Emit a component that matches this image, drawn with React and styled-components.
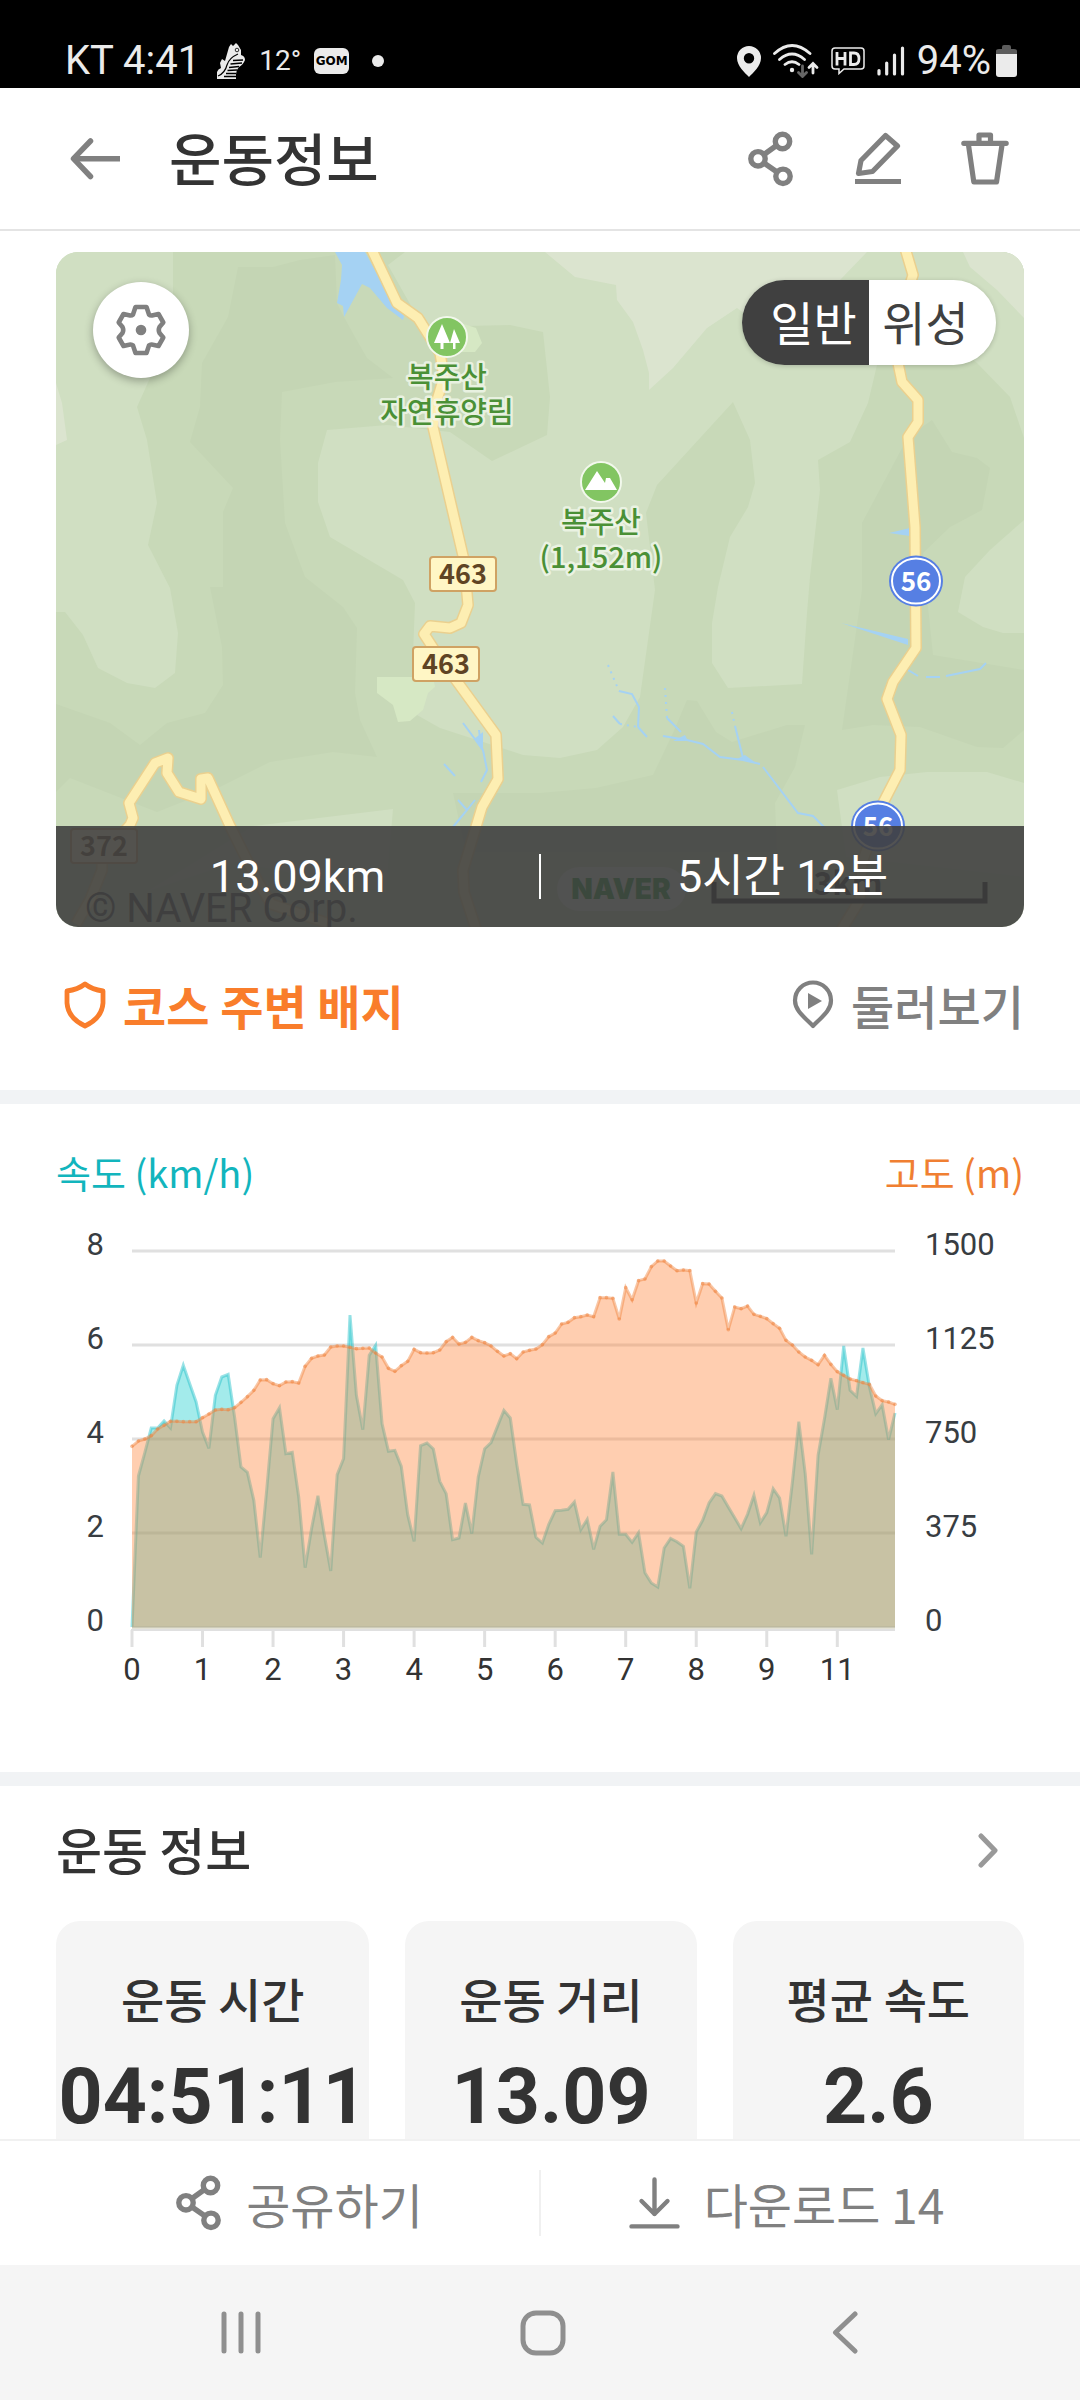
import React, { useState } from 'react';
import styled, { createGlobalStyle } from 'styled-components';

const GlobalStyle = createGlobalStyle`
  * {
    box-sizing: border-box;
  }

  body {
    margin: 0;
    background-color: #fff;
    font-family: 'Noto Sans CJK KR', 'Noto Sans', sans-serif;
    color: #333;
  }

  button {
    margin: 0;
    padding: 0;
    border: none;
    background: none;
    font-family: inherit;
    color: inherit;
    cursor: pointer;
  }

  svg {
    display: block;
    flex-shrink: 0;
  }
`;

// latin digits in Roboto, hangul in Noto
const MIXED = "Roboto, 'Noto Sans CJK KR', sans-serif";

const Screen = styled.div`
  display: flex;
  flex-direction: column;
  height: 100vh;
`;

const StatusBar = styled.div`
  display: flex;
  align-items: center;
  justify-content: space-between;
  flex-shrink: 0;
  height: 88px;
  padding: 34px 63px 0 65px;
  background-color: #000;
  color: #ebebeb;
  font-family: Roboto, sans-serif;
  font-size: 40px;
  line-height: 52px;
`;

const StatusGroup = styled.div`
  display: flex;
  align-items: center;
  gap: ${props => props.gap};
`;

const Temperature = styled.span`
  font-size: 28px;
`;

const GomBadge = styled.span`
  width: 35px;
  height: 26px;
  border-radius: 6px;
  background-color: #ebebeb;
  color: #000;
  font-family: 'DejaVu Sans', sans-serif;
  font-size: 12px;
  font-weight: 700;
  line-height: 26px;
  text-align: center;
`;

const Dot = styled.span`
  width: 12px;
  height: 12px;
  margin-left: 10px;
  border-radius: 50%;
  background-color: #ebebeb;
`;

const Header = styled.header`
  display: flex;
  align-items: center;
  flex-shrink: 0;
  height: 143px;
  padding: 0 42px 0 56px;
  border-bottom: 2px solid #e4e4e4;
  color: #808080;
`;

const IconButton = styled.button`
  display: flex;
  align-items: center;
  justify-content: center;
  width: ${props => props.width || '107px'};
  height: 100px;
`;

const Title = styled.h1`
  flex: 1;
  margin: 0 0 0 35px;
  padding-bottom: 6px;
  color: #333;
  font-size: 57px;
  font-weight: 500;
  line-height: 80px;
`;

const Content = styled.main`
  flex: 1;
  min-height: 0;
  overflow-y: auto;
  scrollbar-width: none;
`;

const Section = styled.section`
  padding: ${props => props.pad};
  border-bottom: ${props => (props.$last ? 'none' : '14px solid #f1f3f5')};
`;

const MapCard = styled.div`
  position: relative;
  border-radius: 22px;
  overflow: hidden;

  > svg {
    width: 100%;
    height: auto;
  }
`;

const SettingsButton = styled.button`
  position: absolute;
  top: 30px;
  left: 37px;
  display: flex;
  align-items: center;
  justify-content: center;
  width: 96px;
  height: 96px;
  border-radius: 50%;
  background-color: #fff;
  color: #808080;
  box-shadow: 0 3px 8px rgba(0, 0, 0, 0.3);
`;

const MapToggle = styled.div`
  position: absolute;
  top: 28px;
  right: 28px;
  display: flex;
  height: 85px;
  border-radius: 43px;
  overflow: hidden;
  box-shadow: 0 1px 5px rgba(0, 0, 0, 0.2);
`;

const ToggleButton = styled.button`
  width: 127px;
  padding: ${props => (props.$side === 'left' ? '0 0 4px 16px' : '0 14px 4px 0')};
  background-color: ${props => (props.$active ? '#404040' : '#fff')};
  color: ${props => (props.$active ? '#fff' : '#404040')};
  font-size: 47px;
  line-height: 78px;
`;

const Summary = styled.div`
  position: absolute;
  right: 0;
  bottom: 0;
  left: 0;
  display: flex;
  align-items: center;
  height: 101px;
  background-color: rgba(64, 64, 64, 0.9);
`;

const SummaryItem = styled.div`
  flex: 1;
  color: #fff;
  font-family: ${MIXED};
  font-size: 45px;
  line-height: 101px;
  text-align: center;
`;

const Divider = styled.div`
  width: 2px;
  height: ${props => props.height};
  background-color: ${props => props.color};
`;

const BadgeRow = styled.div`
  display: flex;
  align-items: center;
  justify-content: space-between;
  height: 163px;
  padding: 0 0 8px 8px;
`;

const BadgeTitle = styled.h2`
  display: flex;
  align-items: center;
  gap: 17px;
  margin: 0;
  color: #f97d2b;
  font-size: 47px;
  font-weight: 700;
  line-height: 64px;
`;

const BrowseButton = styled.button`
  display: flex;
  align-items: center;
  gap: 17px;
  color: #808080;
  font-size: 47px;
  font-weight: 500;
  line-height: 64px;
`;

const Legend = styled.div`
  display: flex;
  justify-content: space-between;
  font-size: 38px;
  line-height: 56px;
`;

const LegendLabel = styled.span`
  color: ${props => props.color};
`;

const ChartSvg = styled.svg`
  width: 100%;
  height: auto;
  margin-top: 20px;
`;

const SectionHead = styled.div`
  display: flex;
  align-items: center;
  justify-content: space-between;
  padding-right: 26px;
`;

const SectionTitle = styled.h2`
  margin: 0;
  padding-bottom: 4px;
  font-size: 50px;
  font-weight: 500;
  line-height: 68px;
`;

const Cards = styled.div`
  display: flex;
  gap: 36px;
  margin-top: 35px;
`;

const Card = styled.div`
  flex: ${props => props.$grow} 1 0;
  padding: 41px 0 60px;
  border-radius: 24px;
  background-color: #f5f5f5;
  text-align: center;
`;

const CardLabel = styled.div`
  font-size: 47px;
  font-weight: 500;
  line-height: 72px;
`;

const CardValue = styled.div`
  margin-top: 15px;
  font-family: ${MIXED};
  font-size: 77px;
  font-weight: 700;
  line-height: 96px;
`;

const ActionBar = styled.div`
  display: grid;
  grid-template-columns: 1fr 2px 1fr;
  align-items: center;
  flex-shrink: 0;
  height: 126px;
  border-top: 2px solid #f1f1f1;
`;

const ActionButton = styled.button`
  display: flex;
  align-items: center;
  justify-content: center;
  gap: 24px;
  height: 100%;
  padding: ${props => (props.$side === 'left' ? '0 0 0 60px' : '0 48px 0 0')};
  color: #808080;
  font-size: 48px;
  line-height: 72px;
`;

const NavBar = styled.nav`
  display: grid;
  grid-template-columns: repeat(3, 1fr);
  flex-shrink: 0;
  height: 135px;
  padding: 0 84px 0 90px;
  background-color: #f5f5f5;
  color: #8f8f8f;
`;

const NavButton = styled.button`
  display: flex;
  align-items: center;
  justify-content: center;
`;

// ---- icons ----

const ShareIcon = () => (
  <svg width="46" height="56" viewBox="0 0 46 56" fill="none" stroke="currentColor" strokeWidth="5.4">
    <circle cx="34.5" cy="10.5" r="7.2" />
    <circle cx="10" cy="27.8" r="7.2" />
    <circle cx="35" cy="45.3" r="7.2" />
    <path d="M16 23.5 L28.5 14.5 M16 32 L29 41" />
  </svg>
);

const EditIcon = () => (
  <svg width="46" height="54" viewBox="0 0 46 54" fill="none" stroke="currentColor" strokeWidth="5.2" strokeLinejoin="round">
    <path d="M30.5 3.5 L42.5 14 L17.5 39.5 L3.5 41.5 L6 28.5 Z" />
    <path d="M0 49.5 H46" />
  </svg>
);

const TrashIcon = () => (
  <svg width="48" height="54" viewBox="0 0 48 54" fill="none" stroke="currentColor" strokeWidth="5.2" strokeLinejoin="round" strokeLinecap="round">
    <path d="M2.8 11.3 H45.2 M18 10 V3 H29.5 V10 M7.5 13 L12.8 50 H35.5 L41 13" />
  </svg>
);

const BackIcon = () => (
  <svg width="50" height="42" viewBox="0 0 50 42" fill="none" stroke="currentColor" strokeWidth="5.5">
    <path d="M50 20.7 H4" />
    <path d="M20.5 3 L3.5 20.7 L20.5 38.5" strokeLinecap="round" strokeLinejoin="round" />
  </svg>
);

const GearIcon = () => (
  <svg width="52" height="52" viewBox="-26 -26 52 52" fill="none" stroke="currentColor" strokeWidth="4.6" strokeLinejoin="round">
    <path d="M-5.5 -23 H5.5 L8 -15.5 Q9.5 -14 12 -14.8 L17.5 -16 L22.3 -7.5 L18.5 -3 Q17 0 18.5 3 L22.3 7.5 L17.5 16 L12 14.8 Q9.5 14 8 15.5 L5.5 23 H-5.5 L-8 15.5 Q-9.5 14 -12 14.8 L-17.5 16 L-22.3 7.5 L-18.5 3 Q-17 0 -18.5 -3 L-22.3 -7.5 L-17.5 -16 L-12 -14.8 Q-9.5 -14 -8 -15.5 Z" />
    <circle r="5.3" fill="currentColor" stroke="none" />
  </svg>
);

const ShieldIcon = () => (
  <svg width="42" height="48" viewBox="0 0 42 48" fill="none" stroke="currentColor" strokeWidth="4.8" strokeLinejoin="round">
    <path d="M21 3 Q28 8.5 39 10 V22 Q38 37 21 45 Q4 37 3 22 V10 Q14 8.5 21 3 Z" />
  </svg>
);

const PlayPinIcon = () => (
  <svg width="42" height="50" viewBox="0 0 42 50" fill="none" stroke="currentColor" strokeWidth="4.2">
    <path d="M21 46 C11 36 3 30 3 20.5 A18 18 0 0 1 39 20.5 C39 30 31 36 21 46 Z" strokeLinejoin="round" />
    <path d="M16 13 L30 21 L16 29 Z" fill="currentColor" stroke="none" />
  </svg>
);

const DownloadIcon = () => (
  <svg width="51" height="52" viewBox="0 0 51 52" fill="none" stroke="currentColor" strokeWidth="4.4" strokeLinecap="round" strokeLinejoin="round">
    <path d="M25.5 2.5 V37 M12.5 24 L25.5 37 L38.5 24 M2.5 49.4 H48.5" />
  </svg>
);

const ChevronIcon = () => (
  <svg width="20" height="35" viewBox="0 0 20 35" fill="none" stroke="#999" strokeWidth="5" strokeLinecap="round" strokeLinejoin="round">
    <path d="M3 3 L17 17.5 L3 32" />
  </svg>
);

const ShoeIcon = () => (
  <svg width="30" height="37" viewBox="0 0 30 37" fill="#ebebeb">
    <path d="M13 4 L15 1 L17 3 L20 0 L22 2 L25 7 L25 12 Q29 13 29 17 Q27 22 23 24 Q20 27 20 31 L20 36 H1 V29 Q2 26 5 25 L4 20 L6 16 L9 18 Z" />
    <path d="M22 11 Q13 15 11 22 Q9 30 2 33" stroke="#000" strokeWidth="1.2" fill="none" />
    <path d="M27 17 L17 17.5 M26 20 L14.500 21 M23 23.500 L13 24.500 M21 27 L11.500 27.500 M20 30.500 L10 30.500 M20 33.500 L8 33.500" stroke="#000" strokeWidth="1.6" />
    <circle cx="21" cy="7" r="1.8" fill="none" stroke="#000" strokeWidth="0.8" />
  </svg>
);

const LocationIcon = () => (
  <svg width="24" height="31" viewBox="0 0 24 31" fill="#ebebeb">
    <path fillRule="evenodd" d="M12 0 A12 12 0 0 1 24 12 C24 20 16 27 12 31 C8 27 0 20 0 12 A12 12 0 0 1 12 0 Z M12 7 A5.2 5.2 0 1 0 12 17.4 A5.2 5.2 0 1 0 12 7 Z" />
  </svg>
);

const WifiIcon = () => (
  <svg width="46" height="34" viewBox="0 0 46 34" fill="none" stroke="#ebebeb" strokeWidth="2.8" strokeLinecap="round">
    <path d="M1.5 9.5 Q19 -6.5 37 9.5 M6.5 15.5 Q19 4.5 31.5 15.5 M12 20.5 Q19 15 26 20.5" />
    <circle cx="19" cy="26" r="2.2" fill="#ebebeb" stroke="none" />
    <path d="M29.5 22 V32 M25.5 28.5 L29.5 32.5 L33.5 28.5" stroke="#666" />
    <path d="M40 29 V20 M36 23.5 L40 19.5 L44 23.5" />
  </svg>
);

const HdIcon = () => (
  <svg width="34" height="28" viewBox="0 0 34 28" fill="none" stroke="#ebebeb">
    <path d="M4 1 H30 Q33 1 33 4 V19 Q33 22 30 22 H13 L8 26.5 V22 H4 Q1 22 1 19 V4 Q1 1 4 1 Z" strokeWidth="1.5" />
    <path d="M6 5 V18.5 M14 5 V18.5 M6 11.5 H14 M19.5 6 V17.5 H23 Q28 17.5 28 11.8 Q28 6 23 6 Z" strokeWidth="2.8" />
  </svg>
);

const SignalIcon = () => (
  <svg width="28" height="30" viewBox="0 0 28 30" stroke="#ebebeb" strokeWidth="3.2" strokeLinecap="round">
    <path d="M2 24.5 V28 M9.7 17 V28 M17.5 9 V28 M25.5 2 V28" />
  </svg>
);

const BatteryIcon = () => (
  <svg width="21" height="32" viewBox="0 0 21 32">
    <path d="M0 9 V6 Q0 4 3 4 H6 V2 Q6 0 8 0 H13 Q15 0 15 2 V4 H18 Q21 4 21 6 V9 Z" fill="#5c5c5c" />
    <path d="M0 9 H21 V29 Q21 32 18 32 H3 Q0 32 0 29 Z" fill="#ebebeb" />
  </svg>
);

// ---- map ----

const ROADS = [
  'M315 -4 L341 51 L362 66 L384 101 L388 125 L381 148 L377 175 L408 308 L412 353 L405 371 L394 376 L374 374 L368 382 L381 402 L440 483 L442 527 L426 555 L407 618 L408 640 L421 680',
  'M20 672 L34 648 L46 618 L46 604 L74 573 L77 566 L73 551 L99 511 L112 506 L111 521 L123 540 L145 547 L145 527 L152 526 L174 574 L201 628 L215 652 L271 671',
  'M849 -4 L857 23 L842 70 L842 111 L846 130 L862 148 L862 170 L852 185 L859 275 L860 396 L837 430 L831 447 L845 483 L844 518 L827 551 L806 611 L804 648 L784 680',
];

const STREAMS = [
  'M582 475 L591 485 M607 484 L631 488 L647 492 L664 505 L687 508 L704 512',
  'M707 515 L742 561 L757 564 L769 576',
  'M563 439 L576 442 L583 455 L582 475',
  'M679 474 L687 506 M611 466 L625 480 M557 464 L564 472',
  'M407 471 L427 498 L431 518 L425 530 M423 478 L425 495',
  'M388 512 L399 524 M402 548 L411 558 L397 575 M419 548 L411 558',
  'M852 418 L862 424 M870 425 L884 425 M890 424 L924 417 L930 411',
];

const YellowShield = ({ x, y, label }) => (
  <g>
    <rect x={x} y={y} width="66" height="34" rx="3" fill="#fff6c5" stroke="#cfa263" strokeWidth="2" />
    <text x={x + 33} y={y + 27} fontSize="27" fontWeight="700" fill="#5f4424" textAnchor="middle">{label}</text>
  </g>
);

const BlueShield = ({ x, y, label }) => (
  <g>
    <ellipse cx={x} cy={y} rx="27" ry="25.5" fill="#567fe3" />
    <ellipse cx={x} cy={y} rx="24" ry="22.5" fill="none" stroke="#fff" strokeWidth="2" />
    <text x={x} y={y + 10} fontSize="26" fontWeight="700" fill="#fff" textAnchor="middle">{label}</text>
  </g>
);

const PlaceLabel = ({ x, y, children }) => (
  <text
    x={x}
    y={y}
    fontSize="29"
    fontWeight="500"
    fill="#4a9036"
    stroke="#f2f8ec"
    strokeWidth="5"
    strokeOpacity="0.8"
    strokeLinejoin="round"
    paintOrder="stroke"
    textAnchor="middle"
  >
    {children}
  </text>
);

const MapDrawing = () => (
  <svg viewBox="0 0 968 675" role="img" aria-label="지도">
    <rect width="968" height="675" fill="#c8d9b8" />
    <g fill="#d0dfc2">
      <path d="M0 0 H117 V100 L94 126 L81 155 L91 188 L101 251 L92 293 L114 336 L122 381 L119 421 L99 436 L71 431 L42 416 L27 383 L9 360 H0 Z" />
      <path d="M262 250 V211 L271 178 L331 173 L394 180 L436 209 L491 183 L494 145 L487 80 L454 73 L367 75 L332 13 L349 0 H968 V186 L954 145 L921 111 L870 70 L830 80 L821 113 L812 151 L794 190 L762 208 L764 238 L754 325 L751 361 L746 432 L672 436 L656 411 V371 L662 335 L674 285 L692 255 L699 231 L694 188 L677 150 L601 233 L590 261 L599 338 L584 445 L567 475 L541 498 L504 506 L467 503 L384 476 L361 463 L356 428 L359 351 L347 328 L274 285 Z" />
      <path d="M968 268 L934 298 L909 325 L902 360 L927 375 L947 381 H968 Z" />
      <path d="M781 538 L824 525 L871 520 H931 L968 531 V625 L790 605 Z" />
      <path d="M197 574 L271 565 L337 557 L330 640 L180 610 L90 640 Z" />
    </g>
    <g fill="#c4d5b4">
      <path d="M182 15 L217 15 L244 8 L279 3 L281 51 L288 65 L299 85 L311 106 L337 126 L279 130 L226 140 L224 188 L229 271 L249 325 L287 355 L301 376 L299 441 L304 468 L321 505 L277 500 L214 510 L164 535 L101 560 L14 526 L0 540 V452 L54 471 L84 493 L111 471 L149 461 L167 433 L166 395 L154 335 L167 335 V260 L177 236 L134 190 L144 155 L146 111 L172 65 Z" />
      <path d="M852 185 L876 168 L896 200 L921 206 L934 216 L926 258 L894 275 L867 301 L872 355 L877 403 L968 418 V478 L947 496 L921 495 L864 475 L817 473 L786 478 L806 338 V271 Z" />
      <path d="M397 541 H484 L540 536 L597 523 L617 481 L631 448 L641 449 L660 480 L676 490 L731 473 H749 L739 515 L719 551 L721 600 H410 Z" />
    </g>
    <g fill="#dbe4cf">
      <path d="M489 0 L519 25 L560 33 L561 48 L577 70 L587 98 L593 121 V138 L617 116 L651 76 L681 56 L700 70 L784 28 L811 0 Z" />
      <path d="M907 0 L914 15 L941 38 L968 66 V0 Z" />
      <path d="M0 131 L6 151 L11 188 L0 193 Z" />
    </g>
    <g fill="#d6e8c4">
      <path d="M321 425 H377 L379 435 L372 441 L367 458 L354 469 L342 470 L337 453 L321 441 Z" />
      <path d="M405 71 L420 76 L426 91 L419 100 L405 100 Z" />
    </g>
    <g fill="#a5d2f3">
      <path d="M279 0 L286 13 L285 28 L281 51 L287 54 L288 65 L306 32 L314 36 L331 56 L347 68 L348 64 L337 51 L309 0 Z" />
      <path d="M833 281 L854 276 V284 Z M785 371 L852 387 V393 Z M418 487 L427 480 L427 500 Z M617 489 L629 483 L632 489 Z M681 507 L689 503 L700 511 Z" />
    </g>
    <g fill="none" stroke="#a5d2f3" strokeWidth="2">
      {STREAMS.map(d => (
        <path key={d} d={d} />
      ))}
      <path d="M552 413 L563 439 M609 436 L611 466 M676 460 L679 474 M564 472 L582 475" strokeDasharray="2 5" />
    </g>
    <g fill="none" strokeLinejoin="round">
      {ROADS.map(d => (
        <path key={d} d={d} stroke="#ead08f" strokeWidth="12" />
      ))}
      {ROADS.map(d => (
        <path key={d} d={d} stroke="#fdeeb2" strokeWidth="9" />
      ))}
    </g>

    <YellowShield x={374} y={305} label="463" />
    <YellowShield x={357} y={395} label="463" />
    <YellowShield x={15} y={577} label="372" />
    <BlueShield x={860} y={329} label="56" />
    <BlueShield x={822} y={574} label="56" />

    <circle cx="391" cy="85" r="20" fill="#82c562" stroke="#f2f8ec" strokeWidth="2" />
    <path d="M386 72 L394 91 H387.5 V97 H384.5 V91 H378 Z M398 77 L404 91 H399.5 V97 H397 V91 H394 Z" fill="#fff" />
    <PlaceLabel x={391} y={136}>복주산</PlaceLabel>
    <PlaceLabel x={391} y={171}>자연휴양림</PlaceLabel>

    <circle cx="545" cy="230" r="20" fill="#82c562" stroke="#f2f8ec" strokeWidth="2" />
    <path d="M529 238 L541 219 L549 231 L550 226 L554 226 L561 238 Z" fill="#fff" />
    <PlaceLabel x={545} y={281}>복주산</PlaceLabel>
    <PlaceLabel x={545} y={316}>(1,152m)</PlaceLabel>

    <text x="29" y="670" fontSize="40" fontFamily="Roboto, sans-serif" fill="#333">© NAVER Corp.</text>
    <rect x="501" y="615" width="129" height="44" rx="22" fill="#fff" fillOpacity="0.6" />
    <text x="565" y="647" fontSize="28" fontWeight="900" fontFamily="Inter, sans-serif" fill="#0a8a20" textAnchor="middle">NAVER</text>
    <text x="792" y="643" fontSize="32" fontWeight="700" fill="#222" textAnchor="middle">3km</text>
    <path d="M658 630 V649 H929 V630" fill="none" stroke="#000" strokeWidth="5" />
  </svg>
);

// ---- speed / altitude chart ----

// both series share one scale, FULL_SCALE is the top grid line (8 km/h, 1500 m)
const FULL_SCALE = 1128;

const SPEED = [
  0, 453, 523, 597, 597, 618, 597, 725, 785, 730, 675, 585, 536, 695, 750, 758, 630, 480, 464, 380,
  208, 410, 625, 658, 520, 524, 390, 178, 295, 394, 275, 168, 457, 505, 936, 695, 592, 815, 845, 610,
  527, 530, 482, 337, 257, 544, 552, 534, 437, 400, 262, 267, 372, 280, 450, 535, 553, 602, 650, 627,
  490, 368, 366, 269, 252, 308, 349, 350, 353, 375, 292, 323, 233, 302, 322, 465, 278, 278, 254, 283,
  163, 132, 120, 237, 266, 256, 242, 116, 285, 320, 372, 400, 393, 360, 328, 295, 338, 395, 313, 343,
  415, 387, 272, 435, 616, 460, 218, 515, 625, 746, 652, 843, 710, 692, 837, 722, 640, 667, 562, 642,
];

const ALTITUDE = [
  542, 558, 564, 574, 594, 605, 617, 617, 616, 616, 616, 628, 639, 651, 653, 652, 658, 674, 691, 710,
  741, 742, 730, 724, 735, 736, 732, 782, 806, 813, 816, 840, 843, 843, 839, 835, 836, 837, 822, 810,
  776, 767, 784, 797, 833, 823, 822, 823, 831, 856, 869, 849, 854, 869, 859, 853, 843, 827, 813, 820,
  805, 825, 830, 834, 847, 871, 882, 909, 914, 928, 931, 936, 931, 988, 988, 986, 924, 1018, 982, 1039,
  1044, 1081, 1098, 1098, 1083, 1069, 1071, 1069, 972, 1030, 1029, 1007, 987, 892, 960, 955, 963, 938, 932, 925,
  910, 896, 860, 846, 825, 810, 800, 787, 815, 788, 766, 755, 744, 739, 733, 728, 693, 679, 675, 668,
];

const PLOT = { left: 76, right: 839, top: 31, bottom: 407 };
const STEP = (PLOT.right - PLOT.left) / (SPEED.length - 1);
const SPEED_TICKS = [8, 6, 4, 2, 0];
const ALTITUDE_TICKS = [1500, 1125, 750, 375, 0];
const DISTANCE_TICKS = [0, 1, 2, 3, 4, 5, 6, 7, 8, 9, 11];

const toPoints = series =>
  series.map((value, i) => [
    PLOT.left + i * STEP,
    PLOT.bottom - (value / FULL_SCALE) * (PLOT.bottom - PLOT.top),
  ]);

const toArea = points =>
  `M${PLOT.left} ${PLOT.bottom} L${points.map(p => p.join(' ')).join(' L')} L${PLOT.right} ${PLOT.bottom} Z`;

const Chart = () => {
  const speed = toPoints(SPEED);
  const altitude = toPoints(ALTITUDE);
  const gridGap = (PLOT.bottom - PLOT.top) / 4;

  return (
    <ChartSvg viewBox="0 0 968 480" role="img" aria-label="속도와 고도">
      {SPEED_TICKS.map((tick, i) => (
        <g key={tick} fontFamily="Roboto, sans-serif" fontSize="31" fill="#383d42">
          {tick > 0 && (
            <path d={`M${PLOT.left} ${PLOT.top + i * gridGap} H${PLOT.right}`} stroke="#e0e0e0" strokeWidth="3" />
          )}
          <text x="48" y={PLOT.top + i * gridGap + 4} textAnchor="end">{tick}</text>
          <text x="869" y={PLOT.top + i * gridGap + 4}>{ALTITUDE_TICKS[i]}</text>
        </g>
      ))}

      <path d={toArea(speed)} fill="rgba(26, 204, 204, 0.4)" />
      <polyline points={speed.join(' ')} fill="none" stroke="rgba(30, 190, 200, 0.45)" strokeWidth="3" />
      <path d={toArea(altitude)} fill="rgba(255, 133, 58, 0.4)" />
      <polyline points={altitude.join(' ')} fill="none" stroke="rgba(240, 130, 60, 0.45)" strokeWidth="3" />
      {altitude.map(([x, y], i) => (
        <circle key={i} cx={x} cy={y} r="1.8" fill="rgba(240, 130, 60, 0.5)" />
      ))}

      <path d={`M${PLOT.left} 408.5 H${PLOT.right}`} stroke="#e4e2d6" strokeWidth="3" />
      <path d={`M${PLOT.left} 407 H${PLOT.right}`} stroke="#b5b39b" strokeWidth="1" />
      <path d={`M${PLOT.left - 1} 410 H${PLOT.right}`} stroke="#e0e0e0" strokeWidth="2" />
      {DISTANCE_TICKS.map((tick, i) => {
        const x = PLOT.left + i * 11 * STEP;
        return (
          <g key={tick}>
            <path d={`M${x} 410 V427`} stroke="#e0e0e0" strokeWidth="3" />
            <text x={x} y="460" fontFamily="Roboto, sans-serif" fontSize="31" fill="#333" textAnchor="middle">{tick}</text>
          </g>
        );
      })}
    </ChartSvg>
  );
};

const STATS = [
  { label: '운동 시간', value: '04:51:11', grow: 312 },
  { label: '운동 거리', value: '13.09', grow: 290 },
  { label: '평균 속도', value: '2.6', grow: 290 },
];

const App = () => {
  const [mapType, setMapType] = useState('normal');

  return (
    <Screen>
      <GlobalStyle />
      <StatusBar>
        <StatusGroup gap="16px">
          <span>KT 4:41</span>
          <StatusGroup gap="13px">
            <ShoeIcon />
            <Temperature>12°</Temperature>
            <GomBadge>GOM</GomBadge>
            <Dot />
          </StatusGroup>
        </StatusGroup>
        <StatusGroup gap="12px">
          <LocationIcon />
          <WifiIcon />
          <HdIcon />
          <SignalIcon />
          <StatusGroup gap="5px">
            <span>94%</span>
            <BatteryIcon />
          </StatusGroup>
        </StatusGroup>
      </StatusBar>

      <Header>
        <IconButton width="78px" aria-label="뒤로">
          <BackIcon />
        </IconButton>
        <Title>운동정보</Title>
        <IconButton aria-label="공유">
          <ShareIcon />
        </IconButton>
        <IconButton aria-label="수정">
          <EditIcon />
        </IconButton>
        <IconButton aria-label="삭제">
          <TrashIcon />
        </IconButton>
      </Header>

      <Content>
        <Section pad="21px 56px 0">
          <MapCard>
            <MapDrawing />
            <SettingsButton aria-label="지도 설정">
              <GearIcon />
            </SettingsButton>
            <MapToggle>
              <ToggleButton $side="left" $active={mapType === 'normal'} onClick={() => setMapType('normal')}>
                일반
              </ToggleButton>
              <ToggleButton $side="right" $active={mapType === 'satellite'} onClick={() => setMapType('satellite')}>
                위성
              </ToggleButton>
            </MapToggle>
            <Summary>
              <SummaryItem>13.09km</SummaryItem>
              <Divider height="45px" color="#fff" />
              <SummaryItem>5시간 12분</SummaryItem>
            </Summary>
          </MapCard>
          <BadgeRow>
            <BadgeTitle>
              <ShieldIcon />
              코스 주변 배지
            </BadgeTitle>
            <BrowseButton>
              <PlayPinIcon />
              둘러보기
            </BrowseButton>
          </BadgeRow>
        </Section>

        <Section pad="40px 56px 72px">
          <Legend>
            <LegendLabel color="#12b5bd">속도 (km/h)</LegendLabel>
            <LegendLabel color="#f07f32">고도 (m)</LegendLabel>
          </Legend>
          <Chart />
        </Section>

        <Section pad="28px 56px 0" $last>
          <SectionHead>
            <SectionTitle>운동 정보</SectionTitle>
            <ChevronIcon />
          </SectionHead>
          <Cards>
            {STATS.map(stat => (
              <Card key={stat.label} $grow={stat.grow}>
                <CardLabel>{stat.label}</CardLabel>
                <CardValue>{stat.value}</CardValue>
              </Card>
            ))}
          </Cards>
        </Section>
      </Content>

      <ActionBar>
        <ActionButton $side="left">
          <ShareIcon />
          공유하기
        </ActionButton>
        <Divider height="66px" color="#f0f0f0" />
        <ActionButton $side="right">
          <DownloadIcon />
          다운로드 14
        </ActionButton>
      </ActionBar>

      <NavBar>
        <NavButton aria-label="최근 앱">
          <svg width="40" height="43" viewBox="0 0 40 43" stroke="currentColor" strokeWidth="5" strokeLinecap="round">
            <path d="M3 3 V40 M20 3 V40 M37 3 V40" />
          </svg>
        </NavButton>
        <NavButton aria-label="홈">
          <svg width="46" height="46" viewBox="0 0 46 46" fill="none" stroke="currentColor" strokeWidth="5">
            <rect x="3" y="3" width="40" height="40" rx="13" />
          </svg>
        </NavButton>
        <NavButton aria-label="이전">
          <svg width="26" height="43" viewBox="0 0 26 43" fill="none" stroke="currentColor" strokeWidth="5" strokeLinecap="round" strokeLinejoin="round">
            <path d="M23 3 L3.5 21.5 L23 40" />
          </svg>
        </NavButton>
      </NavBar>
    </Screen>
  );
};

export default App;
